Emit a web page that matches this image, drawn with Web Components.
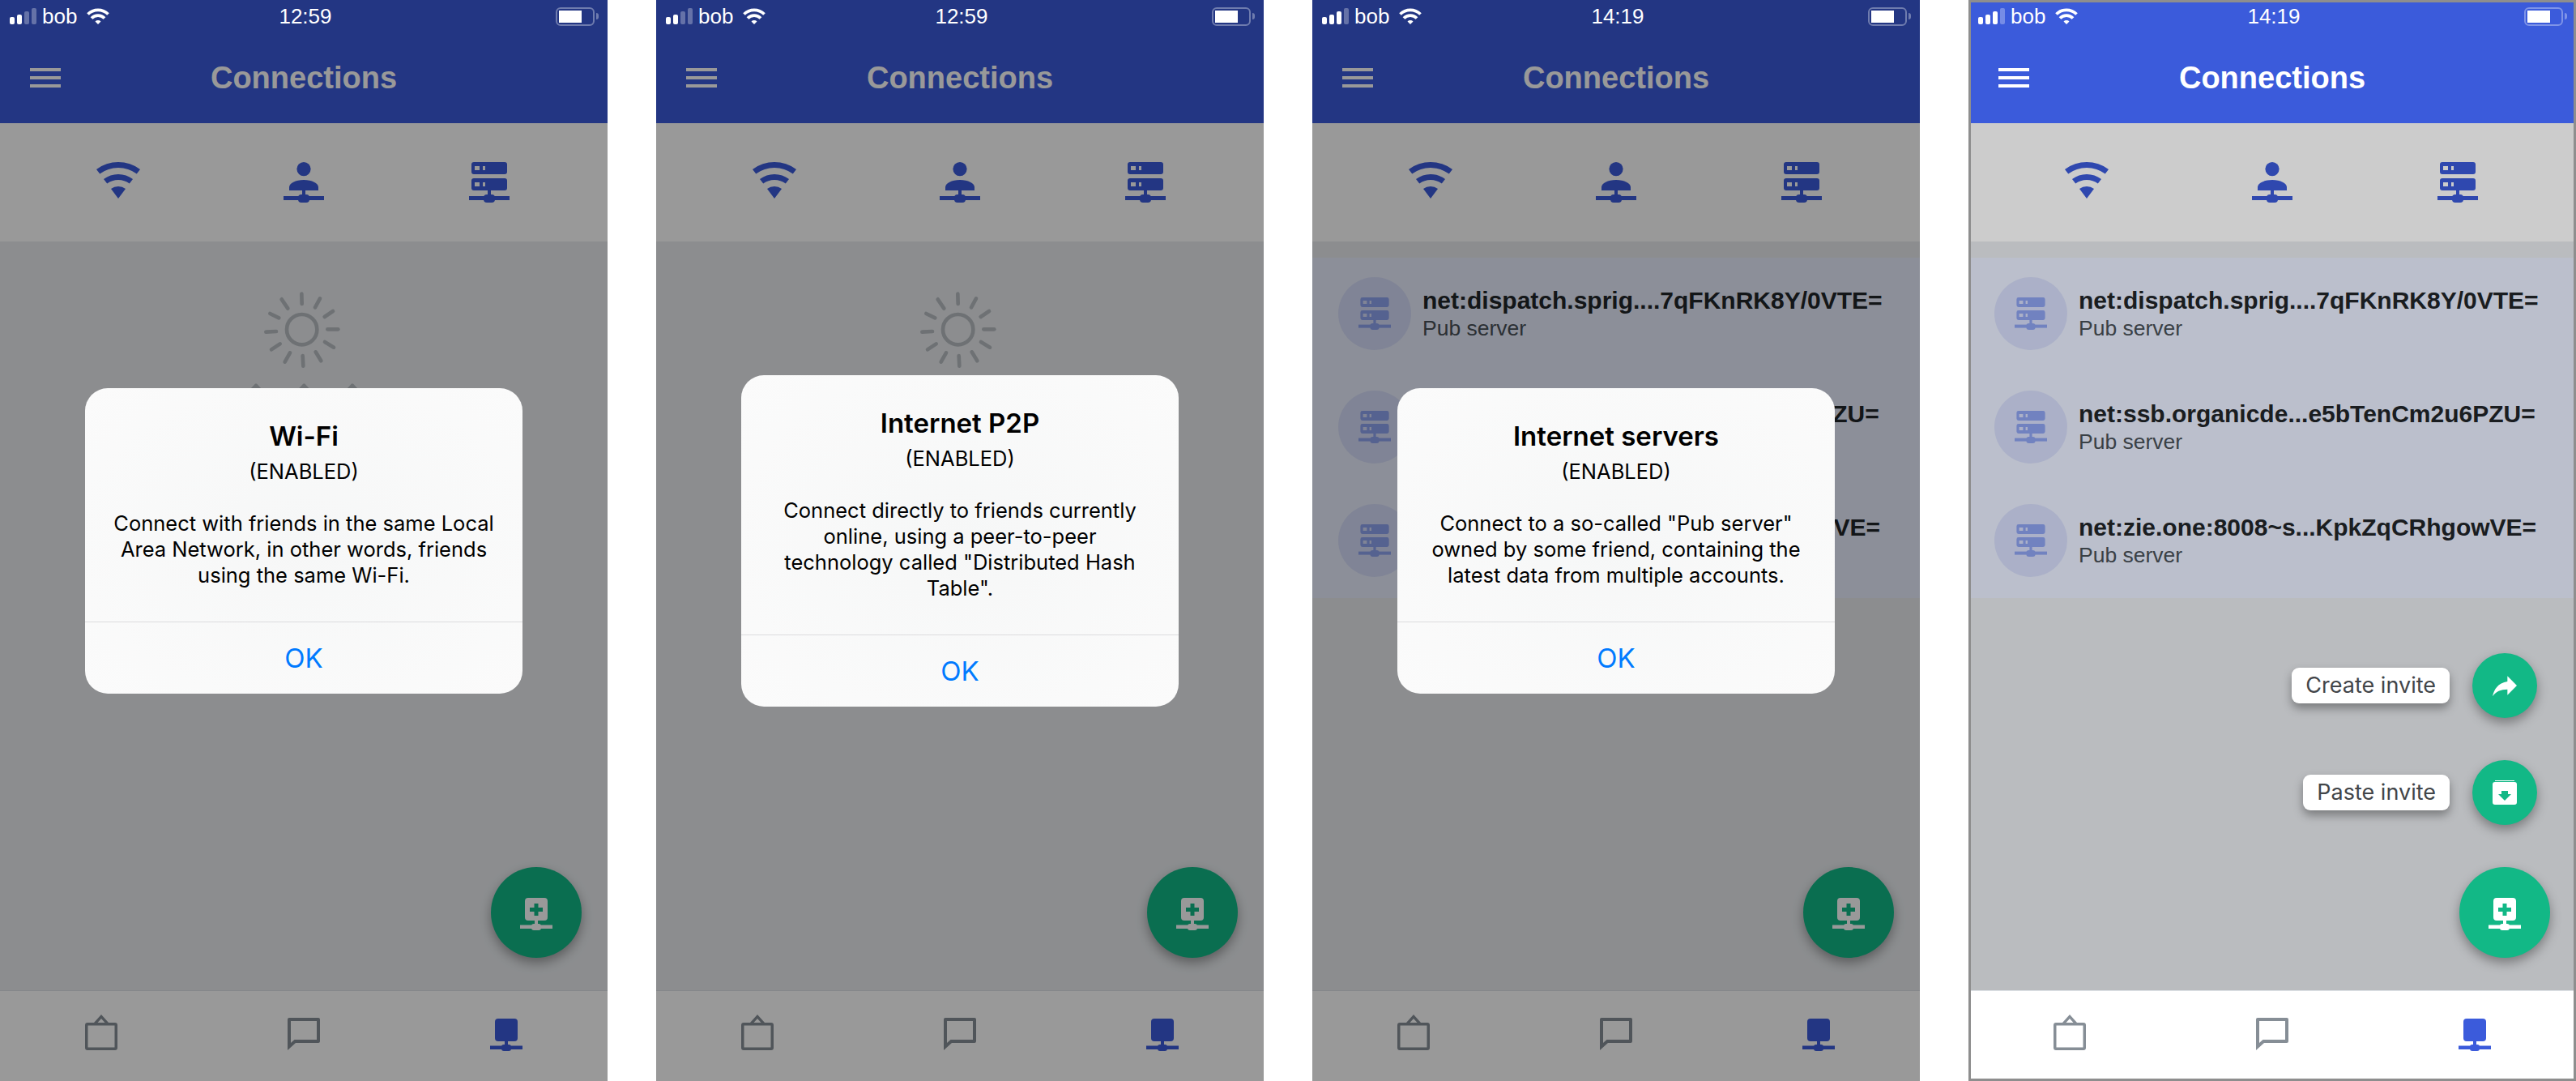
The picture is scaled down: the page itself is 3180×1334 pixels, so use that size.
<!DOCTYPE html>
<html>
<head>
<meta charset="utf-8">
<title>Connections</title>
<style>
  body { margin: 0; width: 3180px; height: 1334px; display: flex; gap: 60px; background: #fff; overflow: hidden;
         font-family: "Liberation Sans", Arial, sans-serif; }
</style>
</head>
<body>
  <conn-screen time="12:59" bars="2" dimmed>
    <sun-empty></sun-empty>
    <fab-group></fab-group>
    <info-dialog slot="dialog">
      <span slot="title">Wi-Fi</span>
      Connect with friends in the same Local<br>Area Network, in other words, friends<br>using the same Wi-Fi.
    </info-dialog>
  </conn-screen>

  <conn-screen time="12:59" bars="2" dimmed>
    <sun-empty></sun-empty>
    <fab-group></fab-group>
    <info-dialog slot="dialog">
      <span slot="title">Internet P2P</span>
      Connect directly to friends currently<br>online, using a peer-to-peer<br>technology called "Distributed Hash<br>Table".
    </info-dialog>
  </conn-screen>

  <conn-screen time="14:19" bars="3" dimmed>
    <server-list></server-list>
    <fab-group></fab-group>
    <info-dialog slot="dialog">
      <span slot="title">Internet servers</span>
      Connect to a so-called "Pub server"<br>owned by some friend, containing the<br>latest data from multiple accounts.
    </info-dialog>
  </conn-screen>

  <conn-screen time="14:19" bars="3" open frame>
    <server-list></server-list>
    <fab-group open></fab-group>
  </conn-screen>

<script>
const ICONS = {
  wifi: `<svg width="54" height="45" viewBox="0 0 54 45"><path d="M0 9A45 45 0 0 1 54 9L49.8 14.6A38 38 0 0 0 4.2 14.6Z"/><path d="M9 21A30 30 0 0 1 45 21L40.8 26.6A23 23 0 0 0 13.2 26.6Z"/><path d="M18 33A15 15 0 0 1 36 33L27 45Z"/></svg>`,
  person: `<svg width="50" height="50" viewBox="0 0 50 50"><circle cx="25" cy="8.6" r="8.6"/><path d="M7 35V31C7 26 15 22 25 22S43 26 43 31V35Z"/><rect x="23" y="34" width="4" height="8"/><rect y="42" width="50" height="5"/><rect x="18" y="40" width="14" height="10" rx="4"/></svg>`,
  server: `<svg width="50" height="50" viewBox="0 0 50 50"><path fill-rule="evenodd" d="M6 0H44A3 3 0 0 1 47 3V12A3 3 0 0 1 44 15H6A3 3 0 0 1 3 12V3A3 3 0 0 1 6 0ZM7 5V10H13V5ZM17 5V10H20V5Z"/><path fill-rule="evenodd" d="M6 20H44A3 3 0 0 1 47 23V32A3 3 0 0 1 44 35H6A3 3 0 0 1 3 32V23A3 3 0 0 1 6 20ZM7 25V30H13V25ZM17 25V30H20V25Z"/><rect x="23" y="34" width="4" height="8"/><rect y="42" width="50" height="5"/><rect x="18" y="40" width="14" height="10" rx="4"/></svg>`,
  serverSmall: `<svg width="40" height="40" viewBox="0 0 50 50"><path fill-rule="evenodd" d="M6 0H44A3 3 0 0 1 47 3V12A3 3 0 0 1 44 15H6A3 3 0 0 1 3 12V3A3 3 0 0 1 6 0ZM7 5V10H13V5ZM17 5V10H20V5Z"/><path fill-rule="evenodd" d="M6 20H44A3 3 0 0 1 47 23V32A3 3 0 0 1 44 35H6A3 3 0 0 1 3 32V23A3 3 0 0 1 6 20ZM7 25V30H13V25ZM17 25V30H20V25Z"/><rect x="23" y="34" width="4" height="8"/><rect y="42" width="50" height="5"/><rect x="18" y="40" width="14" height="10" rx="4"/></svg>`,
  bag: `<svg width="40" height="44" viewBox="0 0 40 44"><path fill-rule="evenodd" d="M3 10H11L20 0L29 10H37A3 3 0 0 1 40 13V41A3 3 0 0 1 37 44H3A3 3 0 0 1 0 41V13A3 3 0 0 1 3 10ZM15.5 10H24.5L20 5ZM3.5 13.500V40.500H36.500V13.500Z"/></svg>`,
  chat: `<svg width="40" height="40" viewBox="0 0 40 40"><path fill-rule="evenodd" d="M2 0H38A2 2 0 0 1 40 2V29A2 2 0 0 1 38 31H10L0 40V2A2 2 0 0 1 2 0ZM4 4V31L8.500 27H36V4Z"/></svg>`,
  net: `<svg width="40" height="40" viewBox="0 0 40 40"><rect x="6" width="28" height="28" rx="4"/><rect x="18" y="27" width="4" height="8"/><rect y="33.500" width="40" height="4.500"/><rect x="14" y="32" width="12" height="8" rx="3"/></svg>`,
  netPlus: `<svg width="40" height="40" viewBox="0 0 40 40"><path fill-rule="evenodd" d="M10 0H30A4 4 0 0 1 34 4V24A4 4 0 0 1 30 28H10A4 4 0 0 1 6 24V4A4 4 0 0 1 10 0ZM17.500 7V12H12V17H17.500V22H22.500V17H28V12H22.500V7Z"/><rect x="18" y="27" width="4" height="8"/><rect y="33.500" width="40" height="4.500"/><rect x="14" y="32" width="12" height="8" rx="3"/></svg>`,
  share: `<svg width="40" height="40" viewBox="0 0 24 24"><path d="M14 9V5l7 7-7 7v-4.100c-5 0-8.500 1.600-11 5.100 1-5 4-10 11-11z"/></svg>`,
  inbox: `<svg width="30" height="30" viewBox="0 0 30 30"><rect x="3" width="24" height="1"/><path fill-rule="evenodd" d="M3 2H27A3 3 0 0 1 30 5V27A3 3 0 0 1 27 30H3A3 3 0 0 1 0 27V5A3 3 0 0 1 3 2ZM11 13V17H7L15 25L23 17H19V13Z"/></svg>`
};

class ConnIcon extends HTMLElement {
  constructor() {
    super();
    this.shadowDOM = this.attachShadow({mode: "open"});
  }

  connectedCallback() {
    this.shadowDOM.innerHTML = `
      <style>
        :host { display: block; line-height: 0; fill: currentColor; }
        svg { display: block; }
      </style>
      ${ICONS[this.getAttribute("name")]}`;
  }
}

class StatusBar extends HTMLElement {
  constructor() {
    super();
    this.shadowDOM = this.attachShadow({mode: "open"});
  }

  connectedCallback() {
    const lit = Number(this.getAttribute("bars"));
    const bars = [9, 12, 16, 20].map((h, i) =>
      `<i style="height:${h}px" class="${i < lit ? "on" : ""}"></i>`).join("");
    this.shadowDOM.innerHTML = `
      <style>
        :host {
          display: grid; grid-template-columns: 1fr auto 1fr; align-items: center;
          height: 40px; padding: 0 11px 0 12px; box-sizing: border-box;
          position: relative; z-index: 3; color: #fff;
          font: 26px "Liberation Sans", Arial, sans-serif;
        }
        .left { display: flex; align-items: center; }
        .signal { display: flex; align-items: flex-end; gap: 3px; height: 20px; }
        .signal i { display: block; width: 6px; border-radius: 2px; background: rgba(255,255,255,.3); }
        .signal i.on { background: #fff; }
        .name { margin-left: 7px; }
        .wifi { margin-left: 12px; display: block; }
        .time { margin-left: 3px; }
        .right { display: flex; justify-content: flex-end; align-items: center; gap: 2px; }
        .battery { width: 48px; height: 23px; box-sizing: border-box; padding: 2px; border: 2px solid rgba(255,255,255,.35); border-radius: 6px; }
        .battery b { display: block; width: 28px; height: 15px; background: #fff; }
        .tip { width: 3px; height: 8px; background: rgba(255,255,255,.35); border-radius: 0 3px 3px 0; }
      </style>
      <div class="left">
        <div class="signal">${bars}</div>
        <span class="name">bob</span>
        <svg class="wifi" width="28" height="20" viewBox="0 0 28 20" fill="none" stroke="#fff" stroke-width="3.800">
          <path d="M1.500 7.500A18 18 0 0 1 26.500 7.500"/>
          <path d="M6 12.500A11 11 0 0 1 22 12.500"/>
          <path stroke="none" fill="#fff" d="M10.500 16.500A5 5 0 0 1 17.500 16.500L14 20Z"/>
        </svg>
      </div>
      <span class="time">${this.getAttribute("time")}</span>
      <div class="right"><div class="battery"><b></b></div><div class="tip"></div></div>`;
  }
}

class AppHeader extends HTMLElement {
  constructor() {
    super();
    this.shadowDOM = this.attachShadow({mode: "open"});
  }

  connectedCallback() {
    this.shadowDOM.innerHTML = `
      <style>
        :host { display: block; height: 152px; background: #3b5bdb; color: #fff; }
        .bar { display: grid; grid-template-columns: 1fr auto 1fr; align-items: center; height: 112px; padding: 0 37px; box-sizing: border-box; }
        .menu { display: flex; flex-direction: column; gap: 6px; width: 38px; }
        .menu i { display: block; height: 4px; background: #fff; }
        h1 { margin: 0; padding-top: 1px; font: bold 38px "Liberation Sans", Arial, sans-serif; }
      </style>
      <status-bar time="${this.getAttribute("time")}" bars="${this.getAttribute("bars")}"></status-bar>
      <div class="bar">
        <div class="menu"><i></i><i></i><i></i></div>
        <h1>Connections</h1>
      </div>`;
  }
}

class ConnTabs extends HTMLElement {
  constructor() {
    super();
    this.shadowDOM = this.attachShadow({mode: "open"});
  }

  connectedCallback() {
    this.shadowDOM.innerHTML = `
      <style>
        :host { display: grid; grid-template-columns: repeat(3, 229px); height: 146px; padding: 48px 0 0 31.500px; box-sizing: border-box; background: #fff; color: #3b5bdb; }
        conn-icon { justify-self: center; }
      </style>
      <conn-icon name="wifi"></conn-icon>
      <conn-icon name="person"></conn-icon>
      <conn-icon name="server"></conn-icon>`;
  }
}

class BottomBar extends HTMLElement {
  constructor() {
    super();
    this.shadowDOM = this.attachShadow({mode: "open"});
  }

  connectedCallback() {
    this.shadowDOM.innerHTML = `
      <style>
        :host { display: grid; grid-template-columns: repeat(3, 1fr); align-items: end; height: 112px; padding-bottom: 38px; box-sizing: border-box; border-top: 1px solid #dee2e6; background: #fff; color: #868e96; }
        conn-icon { justify-self: center; }
        .active { color: #3b5bdb; margin-bottom: -1px; }
      </style>
      <conn-icon name="bag"></conn-icon>
      <conn-icon name="chat"></conn-icon>
      <conn-icon name="net" class="active"></conn-icon>`;
  }
}

class SunEmpty extends HTMLElement {
  constructor() {
    super();
    this.shadowDOM = this.attachShadow({mode: "open"});
  }

  connectedCallback() {
    const rays = [[277,68,278,105],[345,85,327,118],[393,132,362,153],[373,199,412,199],[363,246,396,266],[329,283,349,316],
      [281,297,283,335],[234,286,215,320],[197,253,165,274],[145,209,183,207],[193,157,160,141],[226,122,203,88]];
    this.shadowDOM.innerHTML = `
      <style>
        :host { display: block; padding: 42px 0 0 280px; }
        svg { display: block; }
      </style>
      <svg width="180" height="140" viewBox="0 0 540 420" fill="none" stroke="#b8bdc2" stroke-width="14" stroke-linecap="round">
        <circle cx="278" cy="200" r="56"/>
        ${rays.map(r => `<line x1="${r[0]}" y1="${r[1]}" x2="${r[2]}" y2="${r[3]}"/>`).join("")}
        <path fill="#b8bdc2" stroke-width="10" stroke-linejoin="round" d="M75 440L108 405L141 440ZM253 440L286 405L319 440ZM432 440L465 405L498 440Z"/>
      </svg>`;
  }
}

class ServerRow extends HTMLElement {
  constructor() {
    super();
    this.shadowDOM = this.attachShadow({mode: "open"});
  }

  connectedCallback() {
    this.shadowDOM.innerHTML = `
      <style>
        :host { display: flex; align-items: center; gap: 14px; height: 140px; padding: 0 0 2px 32px; box-sizing: border-box; }
        .avatar { flex: none; display: flex; align-items: center; justify-content: center; width: 90px; height: 90px; border-radius: 50%; background: #d6ddfa; color: #8ea3f0; }
        .title { font: bold 30px/36px "Liberation Sans", Arial, sans-serif; color: #212529; white-space: nowrap; }
        .sub { font: 26.500px/32px "Liberation Sans", Arial, sans-serif; color: #495057; }
      </style>
      <div class="avatar"><conn-icon name="serverSmall"></conn-icon></div>
      <div>
        <div class="title"><slot></slot></div>
        <div class="sub">Pub server</div>
      </div>`;
  }
}

class ServerList extends HTMLElement {
  constructor() {
    super();
    this.shadowDOM = this.attachShadow({mode: "open"});
  }

  connectedCallback() {
    this.shadowDOM.innerHTML = `
      <style>
        :host { display: block; margin-top: 20px; background: #eaefff; }
      </style>
      <server-row>net:dispatch.sprig....7qFKnRK8Y/0VTE=</server-row>
      <server-row>net:ssb.organicde...e5bTenCm2u6PZU=</server-row>
      <server-row>net:zie.one:8008~s...KpkZqCRhgowVE=</server-row>`;
  }
}

class FabGroup extends HTMLElement {
  constructor() {
    super();
    this.shadowDOM = this.attachShadow({mode: "open"});
  }

  connectedCallback() {
    const actions = this.hasAttribute("open") ? `
      <div class="action"><span class="label">Create invite</span><div class="fab small"><conn-icon name="share"></conn-icon></div></div>
      <div class="action"><span class="label">Paste invite</span><div class="fab small"><conn-icon name="inbox"></conn-icon></div></div>` : "";
    this.shadowDOM.innerHTML = `
      <style>
        :host { position: absolute; right: 32px; bottom: 40px; z-index: 1; display: flex; flex-direction: column; align-items: flex-end; gap: 52px; }
        :host([open]) { z-index: 3; }
        .fab { display: flex; align-items: center; justify-content: center; border-radius: 50%; background: #12b886; color: #fff; box-shadow: 0 6px 14px rgba(0,0,0,.35); }
        .main { width: 112px; height: 112px; padding-top: 4px; box-sizing: border-box; }
        .small { width: 80px; height: 80px; }
        .action { display: flex; align-items: center; gap: 28px; margin-right: 16px; }
        .label { display: block; height: 44px; padding: 0 17px; border-radius: 9px; background: #fff; box-shadow: 0 6px 12px rgba(0,0,0,.35); font: 27px/44px Inter, "Liberation Sans", sans-serif; color: #424549; }
      </style>
      ${actions}
      <div class="fab main"><conn-icon name="netPlus"></conn-icon></div>`;
  }
}

class InfoDialog extends HTMLElement {
  constructor() {
    super();
    this.shadowDOM = this.attachShadow({mode: "open"});
  }

  connectedCallback() {
    this.shadowDOM.innerHTML = `
      <style>
        :host { position: absolute; inset: 0; z-index: 4; display: flex; align-items: center; justify-content: center; padding-top: 1px; box-sizing: border-box;
                font-family: Inter, "Liberation Sans", sans-serif; color: #000; text-align: center; }
        .box { width: 540px; border-radius: 28px; background: radial-gradient(ellipse at center, #f6f7f7, #fbfbfb); }
        .text { padding: 39px 0 41px; }
        .title { font-size: 33px; line-height: 40px; font-weight: 600; }
        .state { font-size: 25.500px; line-height: 32px; margin-top: 8px; }
        .body { font-size: 25.500px; line-height: 32px; margin-top: 32px; }
        .ok { border-top: 1px solid #dcdcde; height: 88px; font-size: 33px; line-height: 88px; color: #007aff; }
      </style>
      <div class="box">
        <div class="text">
          <div class="title"><slot name="title"></slot></div>
          <div class="state">(ENABLED)</div>
          <div class="body"><slot></slot></div>
        </div>
        <div class="ok">OK</div>
      </div>`;
  }
}

class ConnScreen extends HTMLElement {
  constructor() {
    super();
    this.shadowDOM = this.attachShadow({mode: "open"});
  }

  connectedCallback() {
    this.shadowDOM.innerHTML = `
      <style>
        :host { display: flex; flex-direction: column; flex: none; position: relative; width: 750px; height: 1334px; overflow: hidden; background: #e9ecef; }
        main { flex: 1; min-height: 0; position: relative; }
        .scrim { position: absolute; inset: 0; z-index: 2; background: rgba(0,0,0,.4); }
        .scrim.light { top: 152px; bottom: 112px; background: rgba(0,0,0,.2); }
        .frame { position: absolute; inset: 0; z-index: 5; border: 3px solid #8e8e8e; }
      </style>
      <app-header time="${this.getAttribute("time")}" bars="${this.getAttribute("bars")}"></app-header>
      <conn-tabs></conn-tabs>
      <main><slot></slot></main>
      <bottom-bar></bottom-bar>
      <div class="scrim ${this.hasAttribute("open") ? "light" : ""}"></div>
      ${this.hasAttribute("frame") ? '<div class="frame"></div>' : ""}
      <slot name="dialog"></slot>`;
  }
}

customElements.define("conn-icon", ConnIcon);
customElements.define("status-bar", StatusBar);
customElements.define("app-header", AppHeader);
customElements.define("conn-tabs", ConnTabs);
customElements.define("bottom-bar", BottomBar);
customElements.define("sun-empty", SunEmpty);
customElements.define("server-row", ServerRow);
customElements.define("server-list", ServerList);
customElements.define("fab-group", FabGroup);
customElements.define("info-dialog", InfoDialog);
customElements.define("conn-screen", ConnScreen);
</script>
</body>
</html>
